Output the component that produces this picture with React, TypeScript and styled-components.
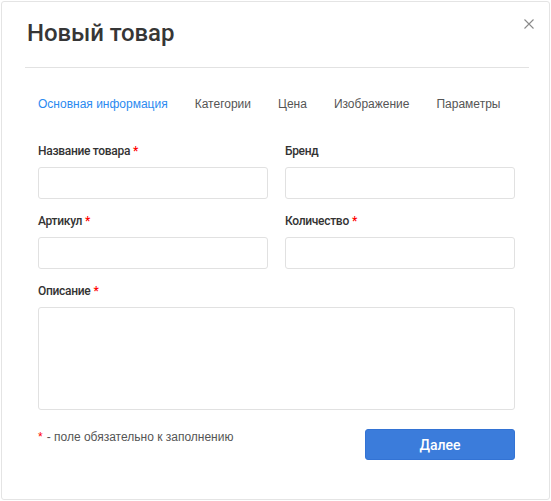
import React from "react";
import styled, { createGlobalStyle } from "styled-components";

const Global = createGlobalStyle`
  html, body { margin: 0; padding: 0; background: #fff; }
  * { box-sizing: border-box; }
`;

const Card = styled.div`
  position: relative;
  margin: 1px 0 0 1px;
  width: 549px;
  height: 499px;
  border: 1px solid #e4e4e4;
  border-radius: 3px;
  background: #fff;
  font-family: Roboto, sans-serif;
`;

const Header = styled.div`
  margin: 0 20px 0 23px;
  padding-top: 15px;
  padding-bottom: 18px;
  border-bottom: 1px solid #e2e2e2;
`;

const Title = styled.h1`
  margin: 0;
  padding-left: 2px;
  font-family: Roboto, sans-serif;
  font-weight: 500;
  font-size: 24px;
  line-height: 32px;
  color: #363636;
  letter-spacing: -0.1px;
`;

const Close = styled.button`
  position: absolute;
  top: 15px;
  right: 13px;
  width: 14px;
  height: 14px;
  padding: 0;
  border: 0;
  background: none;
  display: flex;
  align-items: center;
  justify-content: center;
  cursor: pointer;
`;

const Body = styled.div`
  padding: 28px 34px 0 36px;
`;

const Tabs = styled.div`
  display: flex;
  gap: 27px;
  margin-bottom: 31px;
`;

const Tab = styled.span<{ $active?: boolean }>`
  font-family: "Liberation Sans", Arial, sans-serif;
  font-size: 12px;
  line-height: 16px;
  color: ${(p) => (p.$active ? "#2b8af0" : "#555")};
`;

const Grid = styled.div`
  display: grid;
  grid-template-columns: 230px 230px;
  column-gap: 17px;
  row-gap: 14px;
`;

const Field = styled.div<{ $wide?: boolean }>`
  display: flex;
  flex-direction: column;
  gap: 8px;
  grid-column: ${(p) => (p.$wide ? "1 / -1" : "auto")};
`;

const Label = styled.label`
  font-family: Roboto, sans-serif;
  font-weight: 500;
  font-size: 12px;
  line-height: 16px;
  letter-spacing: -0.3px;
  color: #333;
`;

const Star = styled.span`
  color: #f00;
  margin-left: 3px;
`;

const Input = styled.input`
  display: block;
  width: 100%;
  height: 32px;
  border: 1px solid #e1e1e1;
  border-radius: 3px;
  background: #fff;
  outline: none;
`;

const TextArea = styled.textarea`
  display: block;
  width: 100%;
  height: 103px;
  border: 1px solid #e1e1e1;
  border-radius: 3px;
  background: #fff;
  resize: none;
  outline: none;
`;

const Footer = styled.div`
  display: flex;
  justify-content: space-between;
  align-items: flex-start;
  margin-top: 19px;
`;

const Note = styled.span`
  font-family: "Liberation Sans", Arial, sans-serif;
  font-size: 12px;
  line-height: 16px;
  color: #555;
`;

const NoteStar = styled.span`
  color: #f00;
  margin-right: 4px;
`;

const Button = styled.button`
  width: 150px;
  height: 31px;
  border: 1px solid #3373d4;
  border-radius: 3px;
  background: #3b7cdb;
  color: #fff;
  font-family: Roboto, sans-serif;
  font-weight: 500;
  font-size: 14px;
  cursor: pointer;
`;

const tabs = ["Основная информация", "Категории", "Цена", "Изображение", "Параметры"];

export default function App() {
  return (
    <>
      <Global />
      <Card>
        <Header>
          <Title>Новый товар</Title>
        </Header>
        <Close aria-label="Закрыть">
          <svg width="10" height="10" viewBox="0 0 10 10">
            <path d="M0.5 0.5 L9.5 9.5 M9.5 0.5 L0.5 9.5" stroke="#8a8a8a" strokeWidth="1.1" fill="none" />
          </svg>
        </Close>
        <Body>
          <Tabs>
            {tabs.map((t, i) => (
              <Tab key={t} $active={i === 0}>
                {t}
              </Tab>
            ))}
          </Tabs>
          <Grid>
            <Field>
              <Label>
                Название товара<Star>*</Star>
              </Label>
              <Input />
            </Field>
            <Field>
              <Label>Бренд</Label>
              <Input />
            </Field>
            <Field>
              <Label>
                Артикул<Star>*</Star>
              </Label>
              <Input />
            </Field>
            <Field>
              <Label>
                Количество<Star>*</Star>
              </Label>
              <Input />
            </Field>
            <Field $wide>
              <Label>
                Описание<Star>*</Star>
              </Label>
              <TextArea />
            </Field>
          </Grid>
          <Footer>
            <Note>
              <NoteStar>*</NoteStar>- поле обязательно к заполнению
            </Note>
            <Button>Далее</Button>
          </Footer>
        </Body>
      </Card>
    </>
  );
}
